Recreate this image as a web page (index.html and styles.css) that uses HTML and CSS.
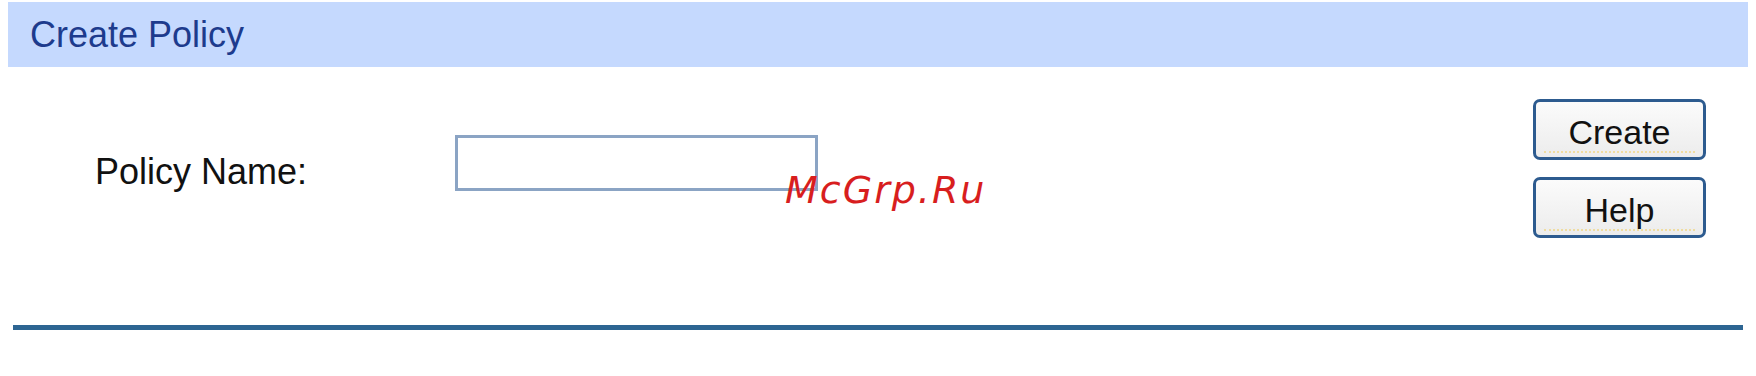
FILE: index.html
```html
<!DOCTYPE html>
<html>

<head>
    <meta charset="utf-8">
    <meta name="viewport" content="width=device-width">
    <title>Create Policy</title>
    <link rel="stylesheet" href="styles.css">
</head>

<body>
    <div id="container">

        <div id="hd">Create Policy</div>

        <div id="ct">
            <div class="row">
                <label for="pname">Policy Name:</label>
                <input type="text" id="pname" name="pname">
            </div>

            <div id="rs">
                <button id="createbt">Create</button>
                <button id="helpbt">Help</button>
            </div>
        </div>

        <div class="rule"></div>

        <div class="mark">McGrp.Ru</div>
    </div>
</body>

</html>
```

FILE: styles.css
```css
body {
    margin: 0;
    background: #fff;
    font-family: "Liberation Sans", Arial, sans-serif;
}

#container {
    position: relative;
    padding: 2px 8px 0 8px;
}

#hd {
    height: 65px;
    display: flex;
    align-items: center;
    padding-left: 22px;
    background-color: #c5d9fe;
    color: #1d3b8d;
    font-size: 36px;
}

#ct {
    display: flex;
    padding: 32px 42px 0 87px;
}

.row {
    display: flex;
    align-items: center;
    margin-top: 36px;
    height: 56px;
}

.row label {
    width: 360px;
    font-size: 36px;
    color: #111;
    padding-top: 18px;
}

.row input {
    box-sizing: border-box;
    width: 363px;
    height: 56px;
    border: 3px solid #8ba4c4;
    background: #fff;
    margin: 0;
    outline: none;
}

#rs {
    margin-left: auto;
    display: flex;
    flex-direction: column;
    gap: 17px;
}

button {
    position: relative;
    box-sizing: border-box;
    width: 173px;
    height: 61px;
    border: 3px solid #2d5b8f;
    border-radius: 7px;
    background: linear-gradient(#fbfbfb, #ececec);
    color: #111;
    font-family: "Liberation Sans", Arial, sans-serif;
    font-size: 34px;
    padding: 5px 0 0 0;
    cursor: pointer;
}

button::after {
    content: "";
    position: absolute;
    left: 8px;
    right: 8px;
    bottom: 4px;
    border-bottom: 2px dotted #efdca0;
}

.rule {
    height: 5px;
    margin: 87px 5px 0 5px;
    background-color: #2d6592;
}

.mark {
    position: absolute;
    left: 785px;
    top: 168px;
    color: #d81e1e;
    font-family: "DejaVu Sans", sans-serif;
    font-style: italic;
    font-size: 38px;
    letter-spacing: 2px;
}
```
